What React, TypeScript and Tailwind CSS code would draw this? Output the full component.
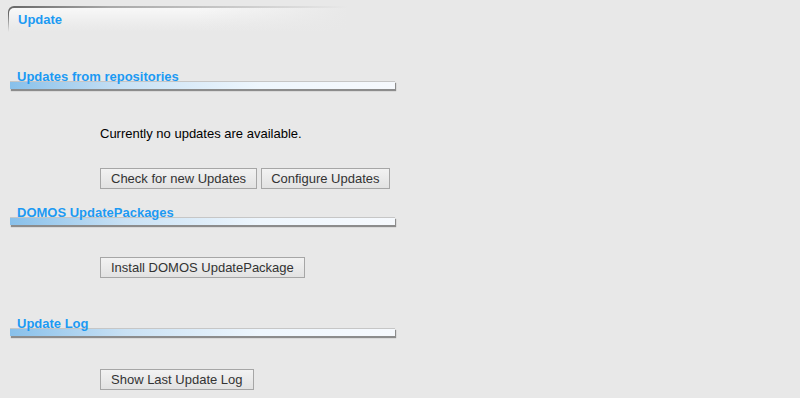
import React from 'react'

function SectionHeader({ title, className = '' }: { title: string; className?: string }) {
  return (
    <div className={`ml-[10px] w-[385px] ${className}`}>
      <div className="relative z-10 pl-[7px] text-[13px] leading-[15px] font-bold text-[#1c9af3]">{title}</div>
      {/* gradient rule under the heading */}
      <div className="-mt-[3px] h-[8px] border-t border-[#c6c6c6] bg-[linear-gradient(to_right,#88c0ea,#c9e1f4_30%,#eef6fd_65%,#f6f9fd)] shadow-[1px_2px_1px_#8c8c8c]" />
    </div>
  )
}

function Button({ children, className = 'px-[10px]' }: { children: React.ReactNode; className?: string }) {
  return (
    <button
      className={`border border-[#a6a6a6] bg-[linear-gradient(to_bottom,#f2f2f2,#e2e2e2)] py-[2px] text-[13px] leading-[15px] text-[#333] ${className}`}
    >
      {children}
    </button>
  )
}

export default function App() {
  return (
    <div className="min-h-[398px] bg-[#e8e8e8] pt-[6px] font-['Liberation_Sans',Arial,sans-serif]">
      {/* Page tab */}
      <div className="ml-[8px] w-[340px] rounded-tl-[6px] bg-[linear-gradient(to_bottom,transparent_30%,#e8e8e8),linear-gradient(to_right,#666,#a8a8a8_30%,#e8e8e8)] pt-[2px] pl-[1px]">
        <div className="h-[24px] rounded-tl-[5px] bg-[linear-gradient(to_right,transparent_55%,#e8e8e8),linear-gradient(to_bottom,#f8f8f8,#ededed_60%,#e8e8e8)] pl-[9px] pt-[4px] text-[13px] leading-[15px] font-bold text-[#1c9af3]">
          Update
        </div>
      </div>

      <SectionHeader title="Updates from repositories" className="mt-[37px]" />
      <div className="pl-[100px]">
        <p className="mt-[37px] text-[13px] leading-[15px] text-black">Currently no updates are available.</p>
        <div className="mt-[27px] flex gap-[4px]">
          <Button>Check for new Updates</Button>
          <Button className="px-[9px]">Configure Updates</Button>
        </div>
      </div>

      <SectionHeader title="DOMOS UpdatePackages" className="mt-[16px]" />
      <div className="mt-[32px] flex pl-[100px]">
        <Button>Install DOMOS UpdatePackage</Button>
      </div>

      <SectionHeader title="Update Log" className="mt-[38px]" />
      <div className="mt-[33px] flex pl-[100px]">
        <Button>Show Last Update Log</Button>
      </div>
    </div>
  )
}
